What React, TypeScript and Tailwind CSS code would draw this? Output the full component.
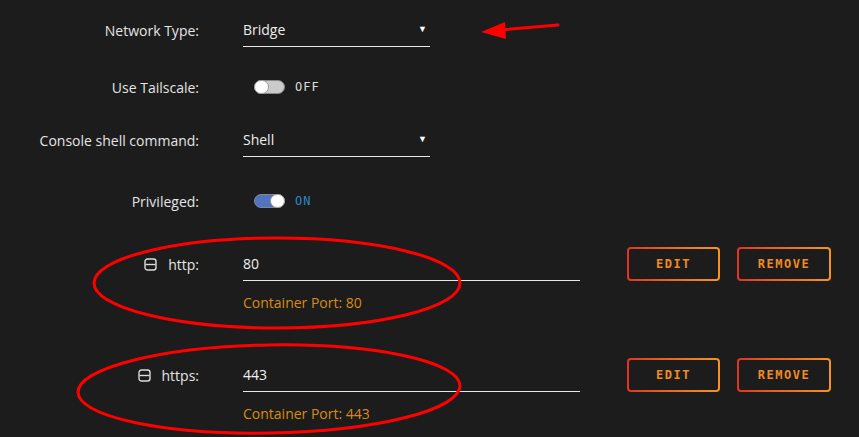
import React from 'react';

const labelFont = { fontFamily: '"Open Sans", "Noto Sans", sans-serif' };

function Label({ children }: { children: React.ReactNode }) {
    return (
        <div className="w-[199px] shrink-0 flex items-center justify-end text-[14px] text-[#e4e4e4]">
            {children}
        </div>
    );
}

function Select({ value }: { value: string }) {
    return (
        <div className="ml-[44px] w-[187px] h-[33px] pb-[2px] flex items-center justify-between border-b border-[#e8e8e8] text-[14px] text-[#ececec]">
            <span>{value}</span>
            <span className="text-[9px] mr-[3px] text-white">▼</span>
        </div>
    );
}

function Toggle({ on }: { on: boolean }) {
    return (
        <div className="ml-[55px] flex items-center gap-[10px]">
            <div
                className={`relative w-[31px] h-[14px] rounded-full border border-[#888] ${on ? 'bg-[#4f74c2]' : 'bg-[#cbcbcb]'}`}
            >
                <div
                    className={`absolute top-[-1px] w-[15px] h-[14px] rounded-full bg-white border border-[#999] ${on ? 'right-[-1px]' : 'left-[-1px]'}`}
                />
            </div>
            <span
                className={`text-[12px] tracking-[1px] ${on ? 'text-[#2a88c8]' : 'text-[#dcdcdc]'}`}
                style={{ fontFamily: '"DejaVu Sans Mono", monospace' }}
            >
                {on ? 'ON' : 'OFF'}
            </span>
        </div>
    );
}

function MinusBox() {
    return (
        <svg width="13" height="13" viewBox="0 0 13 13" className="mr-[11px]">
            <rect x="1" y="1" width="11" height="11" rx="2.5" fill="none" stroke="#dcdcdc" strokeWidth="1.4" />
            <line x1="1.5" y1="6.5" x2="11.5" y2="6.5" stroke="#dcdcdc" strokeWidth="1.4" />
        </svg>
    );
}

function OutlineButton({ text, width }: { text: string; width: string }) {
    return (
        <div className={`${width} h-[34px] rounded-[4px] p-[2px] bg-gradient-to-r from-[#df3324] to-[#f7941f]`}>
            <div
                className="w-full h-full rounded-[2px] bg-[#1c1c1c] flex items-center justify-center text-[12px] font-bold tracking-[1.5px] text-[#f08a24]"
                style={{ fontFamily: '"DejaVu Sans Mono", monospace' }}
            >
                {text}
            </div>
        </div>
    );
}

function PortRow({ name, port, top }: { name: string; port: string; top: string }) {
    return (
        <div className={`flex ${top}`}>
            <div className="flex flex-col">
                <div className="flex items-center h-[32px]">
                    <Label>
                        <MinusBox />
                        <span>{name}:</span>
                    </Label>
                    <div className="ml-[44px] w-[337px] h-[33px] pb-[2px] flex items-center border-b border-[#e8e8e8] text-[14px] text-[#f0f0f0] self-start">
                        {port}
                    </div>
                </div>
                <div className="ml-[243px] mt-[14px] text-[14px] leading-[17px] text-[#d98b14]">
                    Container Port: {port}
                </div>
            </div>
            <div className="ml-[47px] mt-[-1px] flex gap-[17px]">
                <OutlineButton text="EDIT" width="w-[93px]" />
                <OutlineButton text="REMOVE" width="w-[94px]" />
            </div>
        </div>
    );
}

export default function App() {
    return (
        <div className="relative w-[859px] h-[437px] overflow-hidden bg-[#1c1c1c]" style={labelFont}>
            <div className="flex flex-col">
                <div className="flex mt-[14px]">
                    <Label>Network Type:</Label>
                    <Select value="Bridge" />
                </div>
                <div className="flex items-center mt-[33px] h-[14px]">
                    <Label>Use Tailscale:</Label>
                    <Toggle on={false} />
                </div>
                <div className="flex mt-[30px]">
                    <Label>Console shell command:</Label>
                    <Select value="Shell" />
                </div>
                <div className="flex items-center mt-[37px] h-[14px]">
                    <Label>Privileged:</Label>
                    <Toggle on={true} />
                </div>
                <PortRow name="http" port="80" top="mt-[40px]" />
                <PortRow name="https" port="443" top="mt-[48px]" />
            </div>

            {/* red markup on top of the form */}
            <svg className="absolute inset-0 pointer-events-none" width="859" height="437">
                <line x1="558" y1="25" x2="500" y2="30" stroke="#ff0000" strokeWidth="3" strokeLinecap="round" />
                <polygon points="481,32 505,22 506,39" fill="#ff0000" />
                <ellipse cx="277" cy="283" rx="183" ry="45" fill="none" stroke="#ff0000" strokeWidth="3" />
                <ellipse cx="269" cy="389" rx="191" ry="44" fill="none" stroke="#ff0000" strokeWidth="3" transform="rotate(-1 269 389)" />
            </svg>
        </div>
    );
}
